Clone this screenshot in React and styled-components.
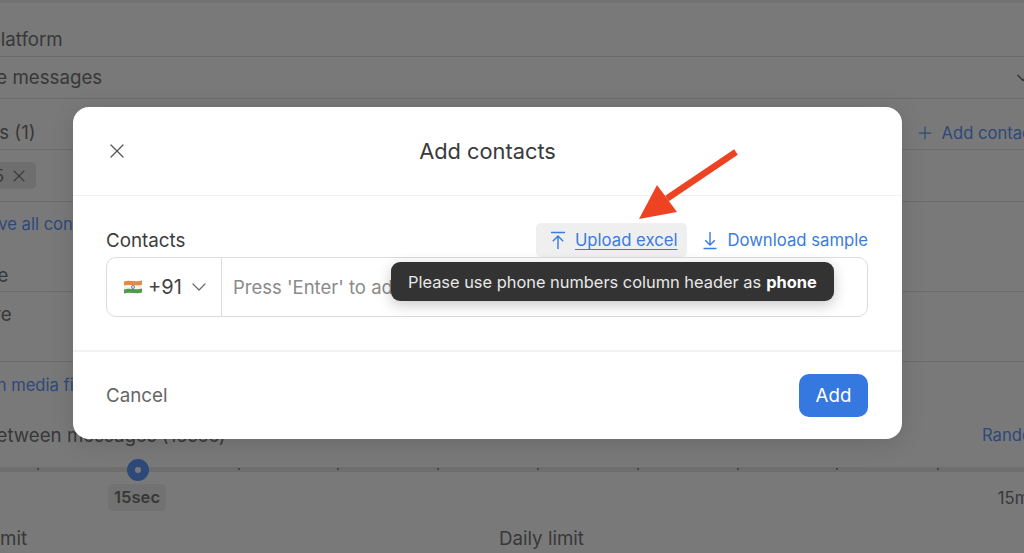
import styled, { createGlobalStyle } from "styled-components";
import { X, ChevronDown, Plus } from "lucide-react";

const GlobalStyle = createGlobalStyle`
  html, body {
    margin: 0;
    padding: 0;
    background: #fff;
  }
  body {
    font-family: Inter, "Liberation Sans", sans-serif;
    overflow: hidden;
  }
`;

const Page = styled.div`
  position: relative;
  width: 1024px;
  height: 553px;
  overflow: hidden;
`;

const Backdrop = styled.div`
  width: 1024px;
  height: 553px;
  box-sizing: border-box;
  border-top: 3px solid #eee;
  overflow: hidden;
  color: #777;
  font-size: 18.7px;
  white-space: nowrap;
`;

const Row = styled.div`
  display: flex;
  align-items: center;
  justify-content: space-between;
  height: ${(p) => p.$h}px;
  margin-left: ${(p) => p.$shift || 0}px;
  padding-top: ${(p) => p.$pt || 0}px;
  padding-bottom: ${(p) => p.$pb || 0}px;
  border-bottom: ${(p) => (p.$line ? "1px solid #e4e4e4" : "none")};
  box-sizing: border-box;
`;

const BlueText = styled.span`
  color: #5f9bff;
  font-size: 16.6px;
  white-space: nowrap;
`;

const AddContact = styled(BlueText)`
  display: flex;
  align-items: center;
  gap: 7px;
  margin-right: -13px;
`;

const RowChevron = styled(ChevronDown)`
  margin-right: -9px;
  color: #777;
`;

const RandomLink = styled(BlueText)`
  margin-right: -45px;
`;

const Chip = styled.div`
  display: flex;
  align-items: center;
  gap: 5px;
  height: 27px;
  padding-right: 7px;
  background: #e8e8e8;
  border-radius: 5px;
  font-size: 16.6px;
`;

const Slider = styled.div`
  position: relative;
  height: 5px;
  background: #e8e8e8;
  margin-top: 5px;
`;

const Tick = styled.i`
  position: absolute;
  top: 1px;
  left: ${(p) => p.$x}px;
  width: 2px;
  height: 2px;
  background: #999;
`;

const Thumb = styled.div`
  position: absolute;
  left: 127px;
  top: -8px;
  width: 22px;
  height: 22px;
  box-sizing: border-box;
  border: 8px solid #5f9bff;
  border-radius: 50%;
  background: #fff;
`;

const SliderLabels = styled.div`
  display: flex;
  justify-content: space-between;
  align-items: center;
  height: 27px;
  margin: 12px -19px 0 108px;
  font-size: 16.6px;
`;

const ValueTag = styled.span`
  padding: 0 6px;
  height: 27px;
  line-height: 27px;
  background: #f0f0f0;
  border-radius: 5px;
  font-weight: 600;
`;

const LimitRow = styled.div`
  display: flex;
  margin: 17px 0 0 -15px;
  line-height: 22px;
`;

const LimitLabel = styled.span`
  width: 514px;
`;

const Overlay = styled.div`
  position: absolute;
  inset: 0;
  background: rgba(0, 0, 0, 0.525);
`;

const Modal = styled.div`
  position: absolute;
  left: 73px;
  top: 107px;
  width: 829px;
  height: 332px;
  background: #fff;
  border-radius: 16px;
  box-shadow: 0 4px 24px rgba(0, 0, 0, 0.12);
  display: flex;
  flex-direction: column;
  color: #333;
`;

const ModalHeader = styled.div`
  position: relative;
  display: flex;
  align-items: center;
  justify-content: center;
  height: 88px;
  border-bottom: 1px solid #f0f0f0;
  font-size: 21.8px;
  color: #3a3a3a;
`;

const CloseButton = styled.button`
  position: absolute;
  left: 32px;
  top: 32px;
  padding: 0;
  border: 0;
  background: none;
  display: flex;
  color: #555;
`;

const ModalBody = styled.div`
  height: 156px;
  padding: 27px 34px 0 33px;
  box-sizing: border-box;
  border-bottom: 2px solid #f2f2f2;
`;

const FieldHead = styled.div`
  display: flex;
  align-items: center;
  justify-content: space-between;
  height: 34px;
`;

const FieldLabel = styled.span`
  font-size: 18.8px;
  color: #3c3c3c;
`;

const Actions = styled.div`
  display: flex;
  align-items: center;
  gap: 9px;
`;

const LinkAction = styled.a`
  display: flex;
  align-items: center;
  gap: 9px;
  height: 34px;
  padding: 0 ${(p) => (p.$active ? "10px" : "0")} 0 ${(p) => (p.$active ? "14px" : "6px")};
  border-radius: 5px;
  background: ${(p) => (p.$active ? "#efefef" : "transparent")};
  color: #3a7be2;
  font-size: 16.7px;
  text-decoration: ${(p) => (p.$active ? "underline" : "none")};
  text-underline-offset: 3px;
  cursor: pointer;
`;

const InputGroup = styled.div`
  display: flex;
  height: 60px;
  box-sizing: border-box;
  border: 1px solid #dcdcdc;
  border-radius: 10px;
`;

const CountryPicker = styled.div`
  display: flex;
  align-items: center;
  width: 115px;
  box-sizing: border-box;
  padding-left: 17px;
  border-right: 1px solid #dcdcdc;
  font-size: 20px;
  color: #444;
`;

const Flag = styled.svg`
  margin-right: 6px;
`;

const PickerChevron = styled(ChevronDown)`
  margin-left: 5px;
  color: #666;
`;

const Placeholder = styled.div`
  display: flex;
  align-items: center;
  padding-left: 11px;
  font-size: 18.5px;
  color: #8a8a8a;
`;

const Tooltip = styled.div`
  position: absolute;
  left: 318px;
  top: 155px;
  height: 39px;
  width: 443px;
  box-sizing: border-box;
  padding: 0 17px;
  display: flex;
  align-items: center;
  gap: 5px;
  white-space: pre;
  background: #333;
  border-radius: 9px;
  box-shadow: 0 4px 14px rgba(0, 0, 0, 0.22);
  color: #e8e8e8;
  font-size: 16.4px;

  b {
    font-weight: 700;
    color: #fff;
  }
`;

const Arrow = styled.svg`
  position: absolute;
  left: 630px;
  top: 145px;
`;

const ModalFooter = styled.div`
  flex: 1;
  display: flex;
  align-items: center;
  justify-content: space-between;
  padding: 0 34px 0 33px;
`;

const CancelButton = styled.button`
  padding: 0;
  border: 0;
  background: none;
  font: inherit;
  font-size: 18.8px;
  color: #666;
`;

const AddButton = styled.button`
  width: 69px;
  height: 43px;
  border: 0;
  border-radius: 10px;
  background: #3478e0;
  color: #fff;
  font: inherit;
  font-size: 18.7px;
`;

function UploadIcon() {
  return (
    <svg width="16" height="19" viewBox="0 0 16 19" fill="none" stroke="currentColor" strokeWidth="1.4">
      <path d="M1 1.5h14M8 18V5M2.8 10.2 8 5l5.2 5.2" />
    </svg>
  );
}

function DownloadIcon() {
  return (
    <svg width="16" height="19" viewBox="0 0 16 19" fill="none" stroke="currentColor" strokeWidth="1.4">
      <path d="M1.5 17.5h13M8 1v13M3.2 9.2 8 14l4.8-4.8" />
    </svg>
  );
}

const ticks = [37, 238, 337, 437, 537, 637, 737, 836, 937];

export default function App() {
  return (
    <Page>
      <GlobalStyle />
      <Backdrop>
        <Row $h={54} $pt={19} $line $shift={-71}>Select platform</Row>
        <Row $h={42} $line $shift={-63}>
          <span>Multiple messages</span>
          <RowChevron size={20} />
        </Row>
        <Row $h={51} $pt={17} $line $shift={-70}>
          <span>Contacts (1)</span>
          <AddContact>
            <Plus size={20} strokeWidth={1.5} />
            Add contact
          </AddContact>
        </Row>
        <Row $h={52} $line $shift={-94}>
          <Chip>
            9876543215
            <X size={20} strokeWidth={1.3} />
          </Chip>
          <span />
        </Row>
        <Row $h={44} $shift={-46}>
          <BlueText>Remove all contacts</BlueText>
        </Row>
        <Row $h={46} $pt={14} $line $shift={-72}>Message</Row>
        <Row $h={70} $pb={24} $line $shift={-77}>Type here</Row>
        <Row $h={46} $shift={-63}>
          <BlueText>Add own media files</BlueText>
        </Row>
        <Row $h={54} $shift={-56}>
          <span>Gap between messages (15sec)</span>
          <RandomLink>Randomize</RandomLink>
        </Row>
        <Slider>
          {ticks.map((x) => (
            <Tick key={x} $x={x} />
          ))}
          <Thumb />
        </Slider>
        <SliderLabels>
          <ValueTag>15sec</ValueTag>
          <span>15min</span>
        </SliderLabels>
        <LimitRow>
          <LimitLabel>Limit</LimitLabel>
          <span>Daily limit</span>
        </LimitRow>
      </Backdrop>
      <Overlay />
      <Modal>
        <ModalHeader>
          <CloseButton aria-label="Close">
            <X size={24} strokeWidth={1.2} />
          </CloseButton>
          Add contacts
        </ModalHeader>
        <ModalBody>
          <FieldHead>
            <FieldLabel>Contacts</FieldLabel>
            <Actions>
              <LinkAction $active>
                <UploadIcon />
                Upload excel
              </LinkAction>
              <LinkAction>
                <DownloadIcon />
                Download sample
              </LinkAction>
            </Actions>
          </FieldHead>
          <InputGroup>
            <CountryPicker>
              <Flag width="18" height="14" viewBox="0 0 18 14">
                <path d="M0 1.5C5 -.5 12 2.5 18 .5V5.2C12 7 5 4 0 6Z" fill="#e58a3f" />
                <path d="M0 5.6C5 3.6 12 6.6 18 4.8V9C12 10.8 5 7.8 0 9.8Z" fill="#f2f2ee" />
                <path d="M0 9.4C5 7.4 12 10.4 18 8.6V12.6C12 14.4 5 11.4 0 13.4Z" fill="#4f9a4a" />
                <circle cx="9" cy="7" r="1.5" fill="none" stroke="#2f4f9a" strokeWidth="0.7" />
              </Flag>
              +91
              <PickerChevron size={24} strokeWidth={1.2} />
            </CountryPicker>
            <Placeholder>Press 'Enter' to add</Placeholder>
          </InputGroup>
        </ModalBody>
        <ModalFooter>
          <CancelButton>Cancel</CancelButton>
          <AddButton>Add</AddButton>
        </ModalFooter>
        <Tooltip>
          <span>Please use phone numbers column header as</span>
          <b>phone</b>
        </Tooltip>
      </Modal>
      <Arrow width="115" height="85" viewBox="0 0 115 85">
        <path d="M106 7 37 53.5" stroke="#ee4323" strokeWidth="6.5" fill="none" />
        <path d="M9 74 27 40 47 67Z" fill="#ee4323" />
      </Arrow>
    </Page>
  );
}
